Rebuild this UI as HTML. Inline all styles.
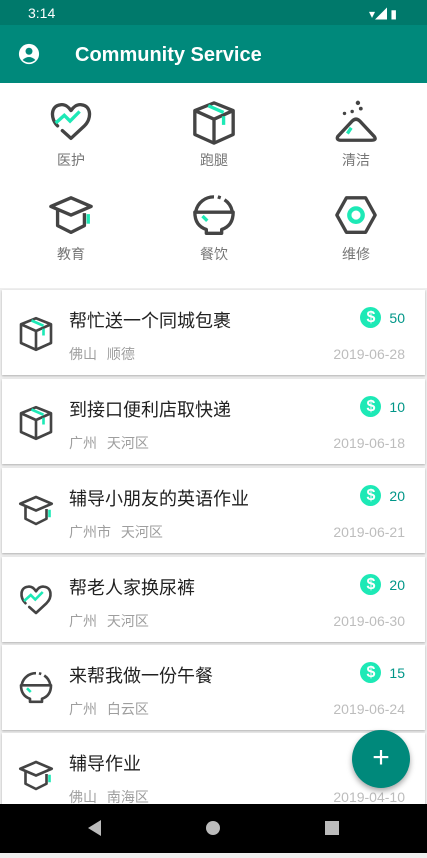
<!DOCTYPE html>
<html><head><meta charset="utf-8"><style>
*{margin:0;padding:0;box-sizing:border-box}
body{width:427px;height:853px;overflow:hidden;background:#eeeeee;font-family:"Liberation Sans","Noto Sans CJK SC",sans-serif;position:relative}
.sb{height:25px;background:#00796b;color:#fff;font-size:14px;padding:5px 0 0 28px;position:relative}
.ab{height:58px;background:#00897b;color:#fff;display:flex;align-items:center}
.ab h1{font-size:20px;font-weight:bold;margin-left:35px;margin-top:2px}
.grid{background:#fff;height:205px;position:relative}
.cell{position:absolute;width:120px;text-align:center;font-size:14px;color:#757575}
.cell svg{display:block;margin:0 auto 4px}
.card{position:absolute;left:2px;width:423px;height:85px;background:#fff;box-shadow:0 1px 2px rgba(0,0,0,.25)}
.card .ic{position:absolute;left:16px;top:26px}
.t{position:absolute;left:67px;top:17px;font-size:18px;color:#212121}
.l{position:absolute;left:67px;top:54px;font-size:14px;color:#9e9e9e;word-spacing:6px}
.d{position:absolute;right:20px;top:56px;font-size:14px;color:#bdbdbd}
.p{position:absolute;right:20px;top:17px;font-size:14px;color:#009688;display:flex;align-items:center;gap:8px}
.coin{width:21px;height:21px;border-radius:50%;background:#1de9b6;color:#fff;font-weight:bold;font-size:16px;text-align:center;line-height:21px}
.nav{position:absolute;left:0;top:804px;width:427px;height:49px;background:#000}
.fab{position:absolute;left:352px;top:730px;width:58px;height:58px;border-radius:50%;background:#00897b;color:#fff;font-size:30px;text-align:center;line-height:56px;box-shadow:0 3px 6px rgba(0,0,0,.35)}
</style></head><body>
<svg width="0" height="0" style="position:absolute"><defs>
<symbol id="heart" viewBox="0 0 48 48"><path d="M10 27 C2 19 3 6 13 5 C18 4 22 8 24 11 C26 8 30 4 35 5 C45 6 46 19 38 27 L24 40 L15 32" fill="none" stroke="#444" stroke-width="3.5" stroke-linecap="round" stroke-linejoin="round"/><path d="M8 24 L17 16 L23 22 L33 12" fill="none" stroke="#1de9b6" stroke-width="3.5"/></symbol>
<symbol id="box" viewBox="0 0 48 48"><path d="M24 3 L44 11 L44 36 L24 45 L4 36 L4 11 Z M4 11 L24 20 L44 11 M24 20 L24 45" fill="none" stroke="#444" stroke-width="3.5" stroke-linejoin="round"/><path d="M18 6 L34 13 M34 17 L34 26" stroke="#1de9b6" stroke-width="3.5"/></symbol>
<symbol id="hill" viewBox="0 0 48 48"><path d="M5 38 Q3 42 9 42 L40 42 Q46 42 43 38 L28 22 Q24 18 20 22 Z" fill="none" stroke="#444" stroke-width="3.5" stroke-linejoin="round"/><path d="M15 35 L19 29" stroke="#1de9b6" stroke-width="3.5"/><circle cx="26" cy="3" r="2.3" fill="#444"/><circle cx="29" cy="9" r="2" fill="#444"/><circle cx="20" cy="12" r="1.8" fill="#444"/><circle cx="12" cy="14" r="1.8" fill="#444"/></symbol>
<symbol id="cap" viewBox="0 0 48 48"><path d="M24 4 L45 13 L24 22 L3 13 Z M10 17 L10 33 L24 40 L38 33 L38 20" fill="none" stroke="#444" stroke-width="3.5" stroke-linejoin="round"/><path d="M42 21 L42 31" stroke="#1de9b6" stroke-width="3.5"/></symbol>
<symbol id="bowl" viewBox="0 0 48 48"><path d="M5 18 A19 19 0 0 1 24 3" fill="none" stroke="#444" stroke-width="3.5"/><path d="M28 3 L31 4 M35 6 A19 19 0 0 1 43 18" fill="none" stroke="#444" stroke-width="3.5"/><path d="M4 19 L44 19 Q44 33 32 37 L32 41 L16 41 L16 37 Q4 33 4 19 Z" fill="none" stroke="#444" stroke-width="3.5" stroke-linejoin="round"/><path d="M12 23 L17 28" stroke="#1de9b6" stroke-width="3.5"/></symbol>
<symbol id="nut" viewBox="0 0 48 48"><path d="M14 4 L34 4 L44 22 L34 40 L14 40 L4 22 Z" fill="none" stroke="#444" stroke-width="3.5" stroke-linejoin="round"/><circle cx="24" cy="22" r="7" fill="none" stroke="#1de9b6" stroke-width="4.5"/></symbol>
</defs></svg>
<div class="sb">3:14<span style="position:absolute;right:30px;top:5px;font-size:12px">▾◢ ▮</span></div>
<div class="ab"><svg width="22" height="22" viewBox="0 0 24 24" style="margin-left:18px"><circle cx="12" cy="12" r="11" fill="#fff"/><circle cx="12" cy="9" r="3.8" fill="#00897b"/><path d="M5 18.5 Q12 12 19 18.5 Q12 24 5 18.5Z" fill="#00897b"/></svg><h1>Community Service</h1></div>
<div class="grid">
<div class="cell" style="left:11px;top:17px"><svg width="46" height="46"><use href="#heart"/></svg>医护</div>
<div class="cell" style="left:154px;top:17px"><svg width="46" height="46"><use href="#box"/></svg>跑腿</div>
<div class="cell" style="left:296px;top:17px"><svg width="46" height="46"><use href="#hill"/></svg>清洁</div>
<div class="cell" style="left:11px;top:111px"><svg width="46" height="46"><use href="#cap"/></svg>教育</div>
<div class="cell" style="left:154px;top:111px"><svg width="46" height="46"><use href="#bowl"/></svg>餐饮</div>
<div class="cell" style="left:296px;top:111px"><svg width="46" height="46"><use href="#nut"/></svg>维修</div>
</div>
<div class="card" style="top:290px"><svg class="ic" width="36" height="36"><use href="#box"/></svg><div class="t">帮忙送一个同城包裹</div><div class="l">佛山 顺德</div><div class="d">2019-06-28</div><div class="p"><span class="coin">$</span>50</div></div>
<div class="card" style="top:379px"><svg class="ic" width="36" height="36"><use href="#box"/></svg><div class="t">到接口便利店取快递</div><div class="l">广州 天河区</div><div class="d">2019-06-18</div><div class="p"><span class="coin">$</span>10</div></div>
<div class="card" style="top:468px"><svg class="ic" width="36" height="36"><use href="#cap"/></svg><div class="t">辅导小朋友的英语作业</div><div class="l">广州市 天河区</div><div class="d">2019-06-21</div><div class="p"><span class="coin">$</span>20</div></div>
<div class="card" style="top:557px"><svg class="ic" width="36" height="36"><use href="#heart"/></svg><div class="t">帮老人家换尿裤</div><div class="l">广州 天河区</div><div class="d">2019-06-30</div><div class="p"><span class="coin">$</span>20</div></div>
<div class="card" style="top:645px"><svg class="ic" width="36" height="36"><use href="#bowl"/></svg><div class="t">来帮我做一份午餐</div><div class="l">广州 白云区</div><div class="d">2019-06-24</div><div class="p"><span class="coin">$</span>15</div></div>
<div class="card" style="top:733px"><svg class="ic" width="36" height="36"><use href="#cap"/></svg><div class="t">辅导作业</div><div class="l">佛山 南海区</div><div class="d">2019-04-10</div></div>
<div class="fab">+</div>
<div class="nav"><svg width="427" height="49"><path d="M101 16 L101 32 L88 24Z" fill="#bbb"/><circle cx="213" cy="24" r="7" fill="#bbb"/><rect x="325" y="17" width="14" height="14" fill="#bbb"/></svg></div>
</body></html>
